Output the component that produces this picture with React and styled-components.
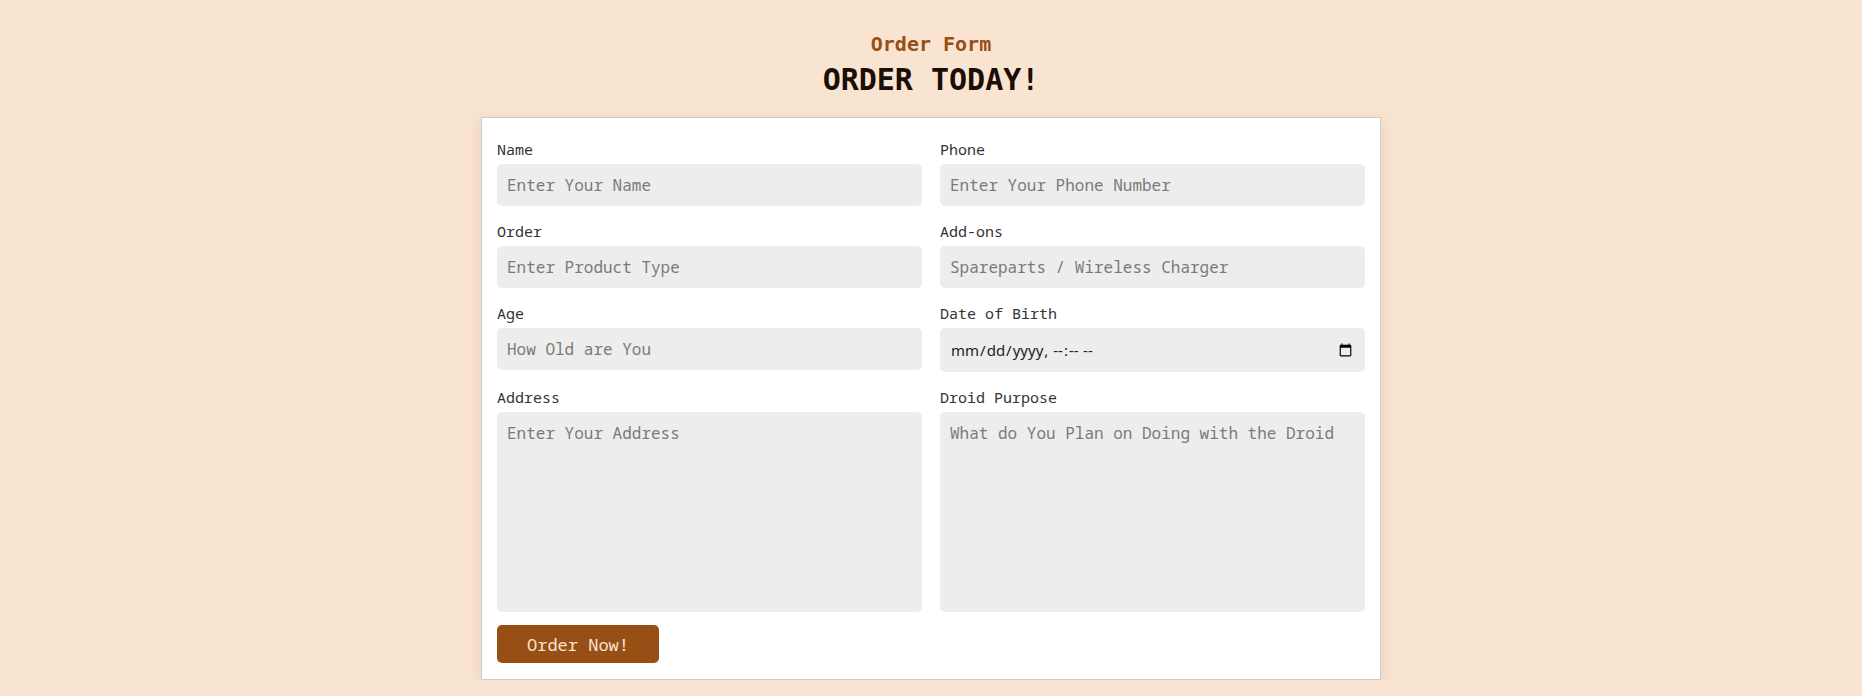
import React from 'react';
import styled, { createGlobalStyle } from 'styled-components';

const GlobalStyle = createGlobalStyle`
  html, body {
    margin: 0;
    padding: 0;
    background-color: #f9e4d2;
    font-family: "DejaVu Sans Mono", monospace;
  }
`;

const Page = styled.div`
  display: flex;
  flex-direction: column;
  align-items: center;
  padding-top: 32px;
`;

const Kicker = styled.h3`
  margin: 0;
  font-size: 20px;
  line-height: 24px;
  font-weight: bold;
  color: #9a4d16;
`;

const Title = styled.h1`
  margin: 6px 0 0 0;
  font-size: 30px;
  line-height: 36px;
  font-weight: bold;
  color: #1a0e06;
`;

const Card = styled.form`
  box-sizing: border-box;
  width: 900px;
  margin-top: 19px;
  background-color: #fff;
  border: 1px solid #cccccc;
  box-shadow: 0 4px 14px rgba(150, 100, 60, 0.18);
  padding: 20px 15px 16px;
`;

const Grid = styled.div`
  display: grid;
  grid-template-columns: 1fr 1fr;
  column-gap: 18px;
  row-gap: 14px;
  align-items: start;
`;

const Field = styled.div`
  display: flex;
  flex-direction: column;
`;

const Label = styled.label`
  font-family: "Noto Sans Mono", "DejaVu Sans Mono", monospace;
  font-size: 15px;
  line-height: 22px;
  color: #333;
  margin-bottom: 4px;
`;

const fieldBase = `
  box-sizing: border-box;
  width: 100%;
  border: none;
  outline: none;
  border-radius: 5px;
  background-color: #ededed;
  color: #333;
  font-family: "Noto Sans Mono", "Liberation Mono", monospace;
  font-size: 16px;
  padding: 0 10px;
  &::placeholder {
    color: #7a7a7a;
  }
`;

const Input = styled.input`
  ${fieldBase}
  height: 42px;
`;

const DateInput = styled.input`
  ${fieldBase}
  height: 44px;
  font-family: "Noto Sans", sans-serif;
  font-size: 15px;
  color: #222;
`;

const TextArea = styled.textarea`
  ${fieldBase}
  height: 200px;
  padding: 10px 10px;
  resize: none;
  line-height: 22px;
`;

const Button = styled.button`
  margin-top: 13px;
  width: 162px;
  height: 38px;
  border: none;
  border-radius: 5px;
  background-color: #974f16;
  color: #fbe3cf;
  font-family: "Noto Sans Mono", "Liberation Mono", monospace;
  font-size: 17px;
  cursor: pointer;
`;

const fields = [
  { label: 'Name', placeholder: 'Enter Your Name' },
  { label: 'Phone', placeholder: 'Enter Your Phone Number' },
  { label: 'Order', placeholder: 'Enter Product Type' },
  { label: 'Add-ons', placeholder: 'Spareparts / Wireless Charger' },
  { label: 'Age', placeholder: 'How Old are You' },
  { label: 'Date of Birth', type: 'datetime-local' },
  { label: 'Address', placeholder: 'Enter Your Address', area: true },
  { label: 'Droid Purpose', placeholder: 'What do You Plan on Doing with the Droid', area: true },
];

function App() {
  return (
    <>
      <GlobalStyle />
      <Page>
        <Kicker>Order Form</Kicker>
        <Title>ORDER TODAY!</Title>
        <Card onSubmit={(e) => e.preventDefault()}>
          <Grid>
            {fields.map((f) => (
              <Field key={f.label}>
                <Label>{f.label}</Label>
                {f.area ? (
                  <TextArea placeholder={f.placeholder} />
                ) : f.type ? (
                  <DateInput type={f.type} />
                ) : (
                  <Input placeholder={f.placeholder} />
                )}
              </Field>
            ))}
          </Grid>
          <Button type="submit">Order Now!</Button>
        </Card>
      </Page>
    </>
  );
}

export default App;
